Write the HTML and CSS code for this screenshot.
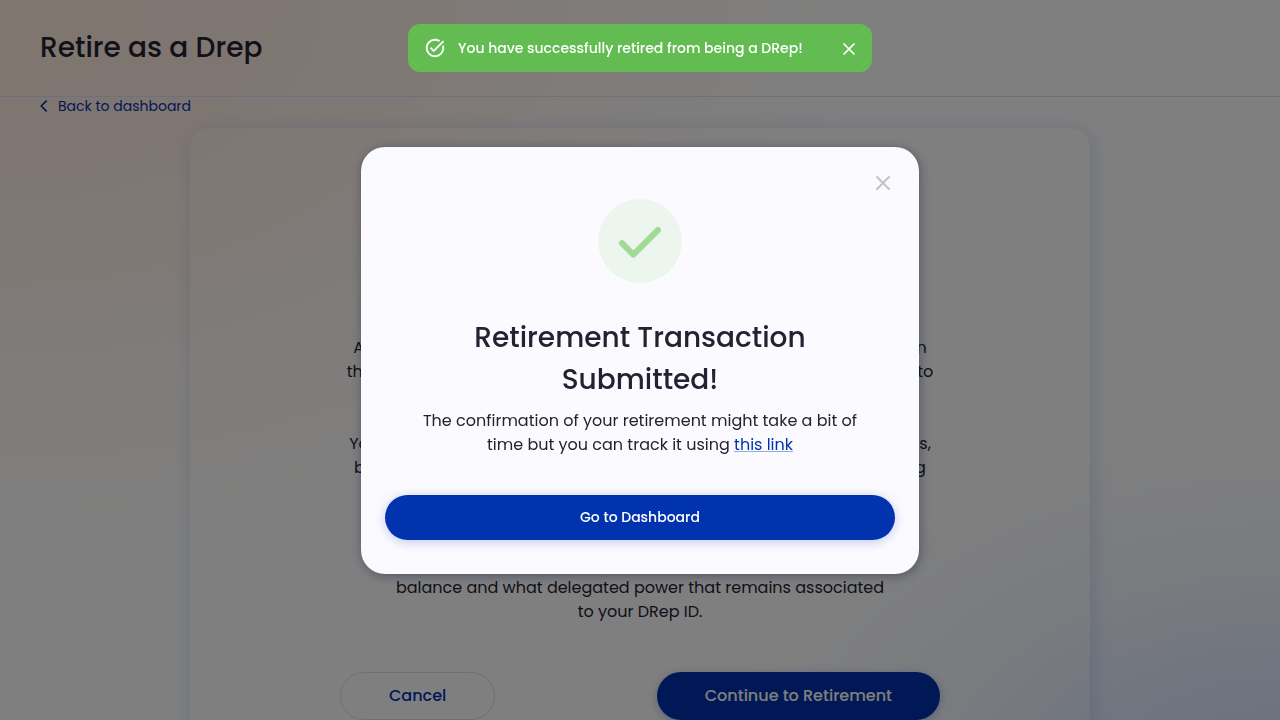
FILE: index.html
```html
<!DOCTYPE html>
<html lang="en">
<head>
<meta charset="utf-8">
<meta name="viewport" content="width=device-width, initial-scale=1">
<title>Retire as a Drep</title>
<link rel="stylesheet" href="styles.css">
</head>
<body>
<div class="page">
  <header class="topbar"><h1 class="topbar-title">Retire as a Drep</h1></header>
  <a class="back" href="#">
    <svg class="back-icon" viewBox="0 0 8 12" fill="none" stroke="currentColor" stroke-width="1.7" stroke-linecap="round" stroke-linejoin="round" aria-hidden="true"><path d="M6.2 0.200 1.200 5l5 4.800"/></svg>
    Back to dashboard
  </a>
  <main class="card">
    <h2 class="card-title">Retire as a DRep</h2>
    <div class="card-text">
      <p>As a DRep you are able to retire whenever you like, which will then mean<br>that your DRep ID becomes inactive and that you will no longer be able to<br>vote.</p>
      <p>You will not be able to vote on any of the new active governance actions,<br>but all of the delegations that you hold now would remain visible during<br>this time.</p>
      <p>Retiring does not remove your own votes.<br>Before continuing, please do review your current total of all the ADA<br>balance and what delegated power that remains associated<br>to your DRep ID.</p>
    </div>
    <div class="actions">
      <button class="btn btn-outline" type="button">Cancel</button>
      <button class="btn btn-primary" type="button">Continue to Retirement</button>
    </div>
  </main>
</div>

<div class="overlay">
  <section class="modal" role="dialog" aria-modal="true" aria-labelledby="modal-title">
    <button class="modal-close" type="button" aria-label="Close">
      <svg viewBox="0 0 24 24" fill="none" stroke="currentColor" stroke-width="2" stroke-linecap="round" aria-hidden="true"><path d="M6 6l12 12M18 6 6 18"/></svg>
    </button>
    <svg class="modal-status" viewBox="0 0 84 84" fill="none" aria-hidden="true">
      <circle cx="42" cy="42" r="42" fill="#ecf6ec"/>
      <path d="M24 44.200 35.300 55.600 60 31" stroke="#a1d996" stroke-width="6" stroke-linecap="round" stroke-linejoin="round"/>
    </svg>
    <h2 class="modal-title" id="modal-title">Retirement Transaction Submitted!</h2>
    <p class="modal-text">The confirmation of your retirement might take a bit of time but you can track it using <a class="link" href="#">this link</a></p>
    <button class="btn btn-wide" type="button">Go to Dashboard</button>
  </section>
</div>

<div class="toast" role="status">
  <svg class="toast-icon" viewBox="0 0 24 24" fill="currentColor" aria-hidden="true"><path d="M22 5.180 10.590 16.600l-4.240-4.240 1.410-1.410 2.830 2.830 10-10L22 5.180zm-2.210 5.040c.13.570.21 1.170.21 1.780 0 4.420-3.580 8-8 8s-8-3.580-8-8 3.580-8 8-8c1.580 0 3.040.46 4.280 1.250l1.440-1.440C16.100 2.670 14.130 2 12 2 6.480 2 2 6.480 2 12s4.480 10 10 10 10-4.480 10-10c0-1.190-.22-2.330-.6-3.390l-1.610 1.610z"/></svg>
  <span class="toast-text">You have successfully retired from being a DRep!</span>
  <button class="toast-close" type="button" aria-label="Dismiss">
    <svg viewBox="0 0 20 20" fill="none" stroke="currentColor" stroke-width="1.7" aria-hidden="true"><path d="M4.500 5.500l11 11M15.500 5.500l-11 11"/></svg>
  </button>
</div>
</body>
</html>
```
FILE: styles.css
```css
* { box-sizing: border-box; }

body {
  margin: 0;
  height: 100vh;
  overflow: hidden;
  color: #242232;
  font-family: Poppins, Inter, "Open Sans", sans-serif;
  font-size: 16px;
  line-height: 24px;
}

h1, h2, p { margin: 0; }
button { font: inherit; cursor: pointer; }

.page {
  min-height: 100vh;
  background:
    radial-gradient(ellipse 860px 540px at 0 0, #ffecdf 0%, #ffede4 30%, #fff3ec 50%, #fff9f5 72%, rgba(255, 255, 255, 0) 100%),
    radial-gradient(ellipse 580px 380px at 100% calc(100vh + 80px), #dbe2ff 0%, #e0e8ff 28%, #e8efff 45%, rgba(242, 245, 255, 0.8) 62%, rgba(255, 255, 255, 0) 100%),
    #ffffff;
}

.topbar {
  display: flex;
  align-items: center;
  height: 97px;
  padding: 0 40px;
  border-bottom: 1px solid #d6e2ff;
}

.topbar-title { font-size: 28px; font-weight: 500; line-height: 42px; }

.back {
  display: flex;
  align-items: center;
  gap: 10px;
  width: max-content;
  margin-left: 40px;
  color: #0033ad;
  font-size: 14px;
  line-height: 19px;
  text-decoration: none;
}

.back-icon { width: 8px; height: 12px; overflow: visible; }

.card {
  max-width: 900px;
  margin: 12px auto 0;
  padding: 150px 150px 40px;
  border-radius: 20px;
  box-shadow: 2px 2px 20px rgba(47, 98, 220, 0.2);
}

.card-title { font-size: 28px; font-weight: 500; line-height: 42px; text-align: center; }

.card-text {
  display: flex;
  flex-direction: column;
  gap: 24px;
  align-items: center;
  margin-top: 16px;
  text-align: center;
  white-space: nowrap;
}

.actions {
  display: flex;
  justify-content: space-between;
  margin-top: 48px;
}

.btn {
  height: 48px;
  padding: 0 48px;
  border: 0;
  border-radius: 100px;
  font-weight: 500;
}

.btn-outline { border: 1px solid #d6e2ff; background: transparent; color: #0033ad; }

.btn-primary {
  background: #0033ad;
  color: #ffffff;
  box-shadow: 0 2px 8px rgba(0, 51, 173, 0.3);
}

.overlay {
  position: fixed;
  inset: 0;
  display: flex;
  align-items: center;
  justify-content: center;
  background: rgba(0, 0, 0, 0.5);
}

.modal {
  position: relative;
  display: flex;
  flex-direction: column;
  align-items: center;
  width: 558px;
  max-width: 90vw;
  padding: 52px 24px 34px;
  border-radius: 24px;
  background: #fbfbff;
  box-shadow: 1px 2px 11px rgba(0, 18, 61, 0.37);
}

.modal-close {
  position: absolute;
  top: 24px;
  right: 24px;
  width: 24px;
  height: 24px;
  padding: 0;
  border: 0;
  background: none;
  color: #c2c2c2;
}

.modal-status { width: 84px; height: 84px; }

.modal-title {
  max-width: 440px;
  margin-top: 34px;
  font-size: 28px;
  font-weight: 500;
  line-height: 42px;
  text-align: center;
}

.modal-text {
  max-width: 450px;
  margin: 8px 0 38px;
  text-align: center;
}

.link {
  color: #0033ad;
  text-decoration: underline;
  text-decoration-color: rgba(0, 51, 173, 0.4);
}

.btn-wide {
  align-self: stretch;
  height: 45px;
  background: #0033ad;
  color: #ffffff;
  font-size: 14px;
  box-shadow: 0 2px 12px rgba(0, 51, 173, 0.24);
}

.toast {
  position: fixed;
  top: 24px;
  left: 50%;
  display: flex;
  align-items: center;
  width: 464px;
  height: 48px;
  margin-left: -232px;
  padding: 0 13px 0 16px;
  border-radius: 12px;
  background: #62bc52;
  color: #ffffff;
  font-size: 14px;
  font-weight: 500;
}

.toast-icon { width: 22px; height: 22px; margin-right: 12px; }
.toast-text { flex: 1; white-space: nowrap; }

.toast-close {
  width: 20px;
  height: 20px;
  padding: 0;
  border: 0;
  background: none;
  color: #ffffff;
}

.toast-close svg, .modal-close svg { display: block; width: 100%; height: 100%; }
```
